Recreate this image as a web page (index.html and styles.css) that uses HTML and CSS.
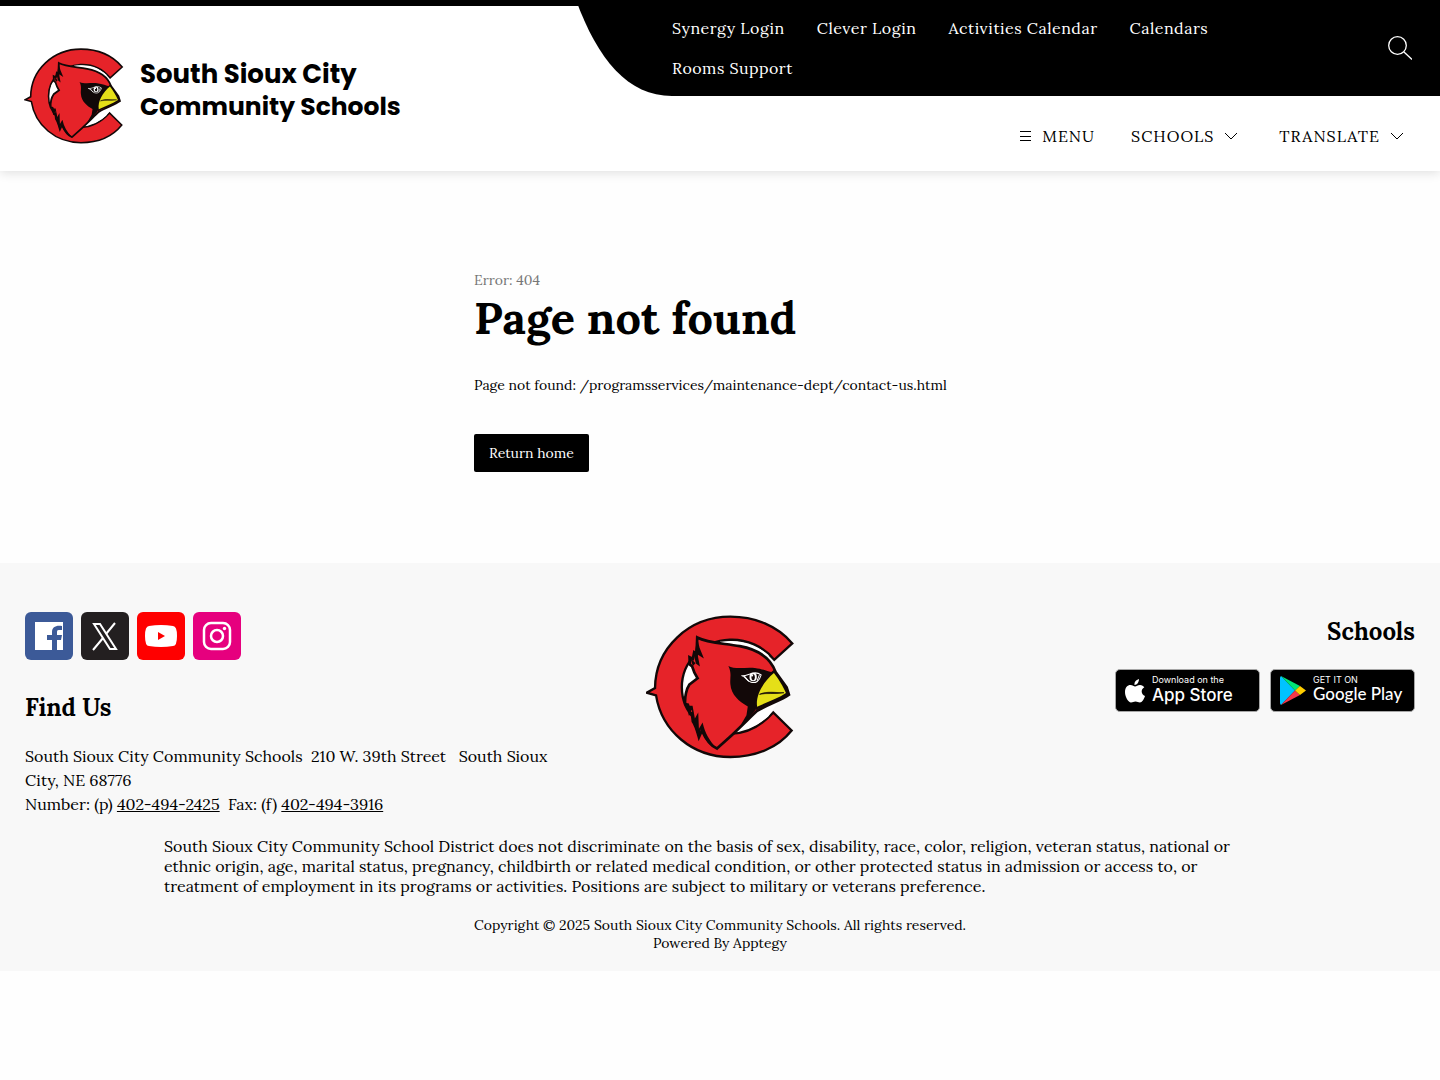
FILE: index.html
```html
<!DOCTYPE html>
<html lang="en">
<head>
    <meta charset="utf-8">
    <meta name="viewport" content="width=device-width, initial-scale=1">
    <title>Page not found | South Sioux City Community Schools</title>
    <link rel="stylesheet" href="styles.css">
</head>
<body>

<!-- cardinal artwork, used in the header and the footer -->
<svg class="defs" aria-hidden="true">
    <symbol id="cardinal" viewBox="20 32 442 430">
        <path d="M457 117 L403 166 C370 125 320 104 270 106 C190 110 127 170 127 248 C127 325 190 385 270 387 C325 387 365 362 400 323 L455 377 C415 427 350 456 272 456 C158 456 67 378 50 272 L22 264 L47 250 C48 130 148 37 272 37 C345 37 412 64 457 117 Z" fill="#e62329" stroke="#120808" stroke-width="7"/>
        <path d="M240 112 C300 105 350 120 388 154 L330 150 Z M154 178 L172 222 L140 248 C130 224 138 196 154 178 Z M415 292 L385 335 Q345 370 300 376 L330 325 Z" fill="#fff"/>
        <path d="M173 99 C205 116 250 116 300 125 C350 134 390 155 407 202 L440 248 L447 270 C425 286 385 299 352 318 C325 342 300 372 232 431 C215 424 198 402 187 377 L178 397 C172 375 166 358 160 350 L157 325 L151 327 C150 315 148 308 145 300 L137 298 C135 278 141 252 150 239 L174 221 C167 210 161 197 158 186 L151 180 L150 158 L160 163 L164 143 L171 148 Z" fill="#e62329" stroke="#120808" stroke-width="8" stroke-linejoin="miter"/>
        <path d="M162 147 L169 177 L181 186 L174 150 L193 162 L180 130 L173 101 L166 145 Z M152 160 L160 184 L168 176 Z M138 296 L150 326 L157 315 L162 352 L177 399 L184 374 C192 400 212 428 232 431 C210 409 196 384 189 353 L178 372 L176 323 L166 341 L159 303 L149 303 Z" fill="#120808"/>
        <path d="M266 184 C285 195 320 187 345 190 C370 193 385 201 402 205 L370 245 L350 303 L345 319 L292 379 L320 331 L324 305 C299 292 274 270 272 239 C270 218 277 207 266 184 Z" fill="#120808"/>
        <path d="M402 205 C415 221 430 246 438 265 C415 281 382 292 352 306 C346 274 370 231 402 205 Z" fill="#e5df18" stroke="#120808" stroke-width="14" paint-order="stroke"/>
        <path d="M359 269 C380 258 410 265 432 264 C402 269 380 264 359 269 Z" fill="#120808" stroke="#120808" stroke-width="2"/>
        <path d="M305 213 C322 218 340 194 364 211 C359 229 348 238 332 232 C320 228 318 216 305 213 Z" fill="#120808" stroke="#fff" stroke-width="3"/>
        <ellipse cx="340" cy="217" rx="11" ry="13" fill="#fff"/>
        <ellipse cx="340" cy="218" rx="5" ry="9" fill="#120808"/>
        <circle cx="337" cy="213" r="3" fill="#fff"/>
        <path d="M313 214 L327 230 M352 228 L359 210" stroke="#fff" stroke-width="3"/>
    </symbol>
    <symbol id="chevron" viewBox="0 0 14 14">
        <path d="M1 4 L7 10 L13 4" fill="none" stroke="currentColor"/>
    </symbol>
</svg>

<header class="header">
    <a class="brand" href="/">
        <svg class="brand-logo" role="img" aria-label="Cardinal logo"><use href="#cardinal"/></svg>
        <span class="brand-name"><span class="brand-city">South Sioux City</span><br>Community Schools</span>
    </a>
    <div class="header-right">
        <div class="topbar">
            <svg class="topbar-curve" viewBox="0 0 96 96" aria-hidden="true">
                <path d="M0 0 C22 60 52 96 96 96 V0 Z"/>
            </svg>
            <nav class="topbar-links" aria-label="Quick links">
                <a href="#">Synergy Login</a>
                <a href="#">Clever Login</a>
                <a href="#">Activities Calendar</a>
                <a href="#">Calendars</a>
                <a href="#">Rooms Support</a>
            </nav>
            <button class="search" type="button" aria-label="Search">
                <svg viewBox="0 0 24 24" fill="none" stroke="currentColor" stroke-width="1.300" aria-hidden="true">
                    <circle cx="9.500" cy="9.500" r="8.800"/>
                    <path d="M16 16 L24 23.500"/>
                </svg>
            </button>
        </div>
        <nav class="menu" aria-label="Main">
            <button type="button">
                <svg class="burger" viewBox="0 0 12 12" stroke="currentColor" aria-hidden="true">
                    <path d="M0 1.500 H11 M0 6.500 H11 M0 10.500 H11"/>
                </svg>
                MENU
            </button>
            <button type="button">SCHOOLS <svg class="chevron" aria-hidden="true"><use href="#chevron"/></svg></button>
            <button type="button">TRANSLATE <svg class="chevron" aria-hidden="true"><use href="#chevron"/></svg></button>
        </nav>
    </div>
</header>

<main class="error">
    <p class="error-code">Error: 404</p>
    <h1>Page not found</h1>
    <p class="error-text">Page not found: /programsservices/maintenance-dept/contact-us.html</p>
    <a class="home" href="/">Return home</a>
</main>

<footer class="footer">
    <div class="footer-top">
        <div class="find">
            <div class="social">
                <a href="#" aria-label="Facebook">
                    <svg viewBox="0 0 48 48">
                        <rect width="48" height="48" rx="6" fill="#3c5a98"/>
                        <path d="M10 10 H38 V38 H32 V28 H36 L37 23 H32 V20 C32 18 33 18 35 18 H37 V14 C31 13 27 15 27 20 V23 H22 V28 H27 V38 H10 Z" fill="#fff"/>
                    </svg>
                </a>
                <a href="#" aria-label="X">
                    <svg viewBox="0 0 48 48">
                        <rect width="48" height="48" rx="6" fill="#231f20"/>
                        <path d="M13 12 H19 L35 37 H29 Z" fill="none" stroke="#fff" stroke-width="2"/>
                        <path d="M34 11 L25 22 M22 26 L12 38" stroke="#fff" stroke-width="2"/>
                    </svg>
                </a>
                <a href="#" aria-label="YouTube">
                    <svg viewBox="0 0 48 48">
                        <rect width="48" height="48" rx="6" fill="#f00"/>
                        <path d="M12 14 Q24 12 36 14 Q40 14 40 24 Q40 34 36 34 Q24 36 12 34 Q8 34 8 24 Q8 14 12 14 Z" fill="#fff"/>
                        <path d="M21 20 L28 24 L21 28 Z" fill="#f00"/>
                    </svg>
                </a>
                <a href="#" aria-label="Instagram">
                    <svg viewBox="0 0 48 48">
                        <rect width="48" height="48" rx="6" fill="#e6007e"/>
                        <rect x="11" y="11" width="26" height="26" rx="7" fill="none" stroke="#fff" stroke-width="2.500"/>
                        <circle cx="24" cy="24" r="6" fill="none" stroke="#fff" stroke-width="2.500"/>
                        <circle cx="31.500" cy="16.500" r="1.700" fill="#fff"/>
                    </svg>
                </a>
            </div>
            <h2>Find Us</h2>
            <p>South Sioux City Community Schools&nbsp; 210 W. 39th Street &nbsp; South Sioux City, NE 68776<br>
                Number: (p) <a href="tel:402-494-2425">402-494-2425</a>&nbsp; Fax: (f) <a href="tel:402-494-3916">402-494-3916</a></p>
        </div>
        <svg class="footer-logo" role="img" aria-label="Cardinal logo"><use href="#cardinal"/></svg>
        <div class="schools">
            <h2>Schools</h2>
            <div class="stores">
                <a class="store" href="#">
                    <svg class="apple" viewBox="0 0 20 24" fill="#fff" aria-hidden="true">
                        <path d="M14 0 C14 3 12 6 9.500 6 C9 3 11 1 14 0 Z"/>
                        <path d="M10 7.500 C11.500 7.500 12.500 6 15 6 C17 6 18.500 7 19.300 8.300 C15.500 10.500 16 15.500 20 17 C19 20 17 23.500 15 23.500 C13 23.500 12.500 22.500 10.500 22.500 C8.500 22.500 8 23.500 6 23.500 C3.500 23.500 0 18 0 13 C0 8.500 2.500 6 5.500 6 C7.500 6 9 7.500 10 7.500 Z"/>
                    </svg>
                    <span><small>Download on the</small><b>App Store</b></span>
                </a>
                <a class="store store-google" href="#">
                    <svg class="play" viewBox="0 0 26 29" aria-hidden="true">
                        <path d="M1 0 L15 14.500 L1 29 Q0 28 0 27 V2 Q0 1 1 0 Z" fill="#00c3ff"/>
                        <path d="M1 0 L20 10 L15 14.500 Z" fill="#00e676"/>
                        <path d="M1 29 L20 19 L15 14.500 Z" fill="#f5384a"/>
                        <path d="M20 10 L26 14.500 L20 19 L15 14.500 Z" fill="#ffce00"/>
                    </svg>
                    <span><small>GET IT ON</small><b>Google Play</b></span>
                </a>
            </div>
        </div>
    </div>
    <p class="notice">South Sioux City Community School District does not discriminate on the basis of sex, disability, race, color, religion, veteran status, national or ethnic origin, age, marital status, pregnancy, childbirth or related medical condition, or other protected status in admission or access to, or treatment of employment in its programs or activities. Positions are subject to military or veterans preference.</p>
    <p class="copyright">Copyright © 2025 South Sioux City Community Schools. All rights reserved.<br>Powered By Apptegy</p>
</footer>

</body>
</html>
```
FILE: styles.css
```css
* {
    box-sizing: border-box;
}

body {
    margin: 0;
    background: #fefefe;
    color: #000;
    font-family: Lora, "Liberation Serif", serif;
    font-size: 16px;
}

h1, h2, p {
    margin: 0;
}

a {
    color: inherit;
}

button {
    padding: 0;
    border: 0;
    background: none;
    color: inherit;
    font: inherit;
    cursor: pointer;
}

svg {
    display: block;
    flex-shrink: 0;
}

.defs {
    position: absolute;
    width: 0;
    height: 0;
}

/* header */

.header {
    display: flex;
    border-top: 6px solid #000;
    background: #fff;
    box-shadow: 0 2px 10px rgba(0, 0, 0, 0.12);
}

.brand {
    display: flex;
    width: 40%;
    align-items: center;
    gap: 16px;
    padding: 14px 0 0 24px;
    text-decoration: none;
}

.brand-logo {
    width: 100px;
    height: 96px;
}

.brand-name {
    padding-bottom: 10px;
    font-family: Poppins, Inter, sans-serif;
    font-size: 25px;
    font-weight: 700;
    line-height: 32px;
}

.brand-city {
    font-size: 26px;
}

.header-right {
    width: 60%;
}

.topbar {
    display: flex;
    align-items: center;
    height: 96px;
    margin-top: -6px;
    padding-right: 28px;
    background: linear-gradient(#000, #000) 95px 0 no-repeat;
    color: #fff;
}

.topbar-curve {
    width: 96px;
    height: 96px;
}

.topbar-links {
    display: flex;
    flex: 1;
    flex-wrap: wrap;
    column-gap: 32px;
    padding-right: 96px;
    letter-spacing: 0.03em;
    line-height: 40px;
}

.topbar-links a {
    text-decoration: none;
}

.search svg {
    width: 24px;
    height: 24px;
}

.menu {
    display: flex;
    justify-content: flex-end;
    align-items: center;
    gap: 36px;
    height: 75px;
    padding: 4px 31px 0 0;
}

.menu button {
    display: flex;
    align-items: center;
    gap: 10px;
    letter-spacing: 1px;
}

.burger {
    width: 12px;
    height: 12px;
}

.chevron {
    width: 14px;
    height: 14px;
    margin-right: 5px;
}

/* error message */

.error {
    max-width: 492px;
    margin: 0 auto;
    padding: 100px 0 91px;
    font-size: 14px;
    line-height: 18px;
}

.error-code {
    color: #777;
}

.error h1 {
    margin-bottom: 29px;
    font-size: 45px;
    line-height: 58px;
}

.error-text {
    margin-bottom: 40px;
}

.home {
    display: inline-block;
    padding: 10px 15px;
    border-radius: 2px;
    background: #000;
    color: #fff;
    text-decoration: none;
}

/* footer */

.footer {
    padding: 49px 25px 19px;
    background: #f8f8f8;
}

.footer h2 {
    font-size: 24px;
    line-height: 30px;
}

.footer-top {
    display: grid;
    grid-template-columns: 1fr 148px 1fr;
    gap: 96px;
}

.social {
    display: flex;
    gap: 8px;
    margin-bottom: 33px;
}

.social svg {
    width: 48px;
    height: 48px;
}

.find p {
    margin-top: 21px;
    line-height: 24px;
}

.footer-logo {
    width: 148px;
    height: 144px;
    margin-top: 3px;
}

.schools {
    padding-top: 5px;
    text-align: right;
}

.stores {
    display: flex;
    justify-content: flex-end;
    gap: 10px;
    margin-top: 22px;
}

.store {
    display: flex;
    align-items: center;
    gap: 7px;
    width: 145px;
    height: 43px;
    padding-left: 9px;
    border: 1px solid #a6a6a6;
    border-radius: 5px;
    background: #000;
    color: #fff;
    font-family: Inter, sans-serif;
    text-align: left;
    text-decoration: none;
    white-space: nowrap;
}

.store small,
.store b {
    display: block;
}

.store small {
    font-size: 9px;
    line-height: 10px;
}

.store b {
    margin-bottom: 2px;
    font-size: 17px;
    font-weight: 500;
    line-height: 20px;
}

.store-google small {
    line-height: 8px;
}

.store-google b {
    font-family: Lato, sans-serif;
}

.apple {
    width: 20px;
    height: 24px;
}

.play {
    width: 26px;
    height: 29px;
}

.notice {
    width: 80%;
    margin: 20px auto;
    line-height: 20px;
}

.copyright {
    font-size: 14px;
    line-height: 18px;
    text-align: center;
}
```
